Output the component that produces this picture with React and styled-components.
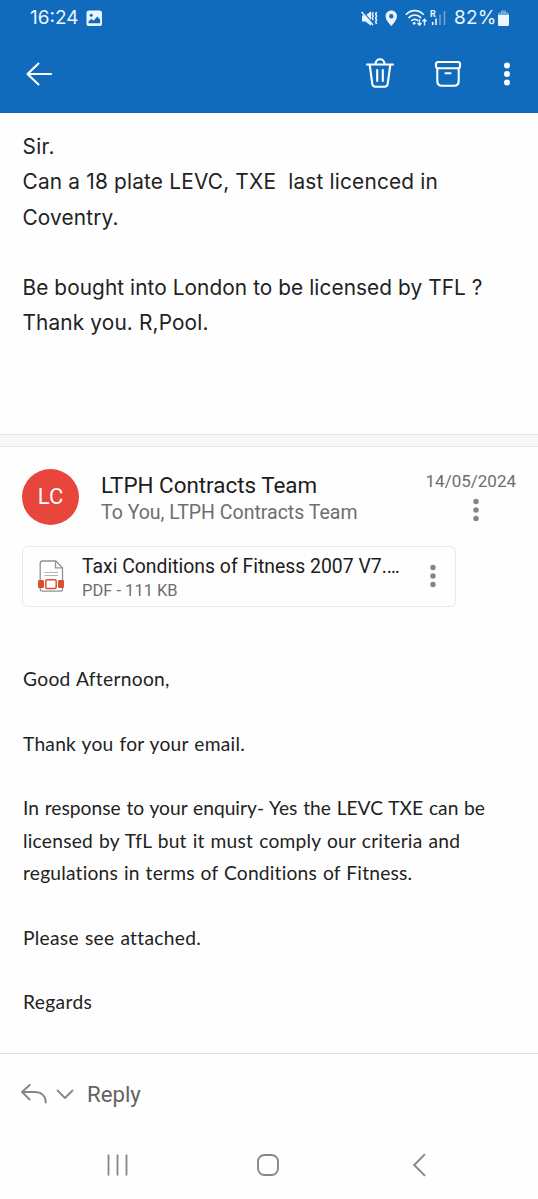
import React from "react";
import styled, { createGlobalStyle } from "styled-components";

const GlobalStyle = createGlobalStyle`
    * {
        box-sizing: border-box;
    }
    body {
        margin: 0;
        background: #fff;
    }
    svg {
        display: block;
        flex: none;
    }
`;

const Screen = styled.div`
    display: flex;
    flex-direction: column;
    width: 538px;
    height: 1199px;
    overflow: hidden;
    background: #fefefe;
    font-family: Roboto, sans-serif;
`;

const Header = styled.header`
    height: 113px;
    background: #106bbc;
    color: #fff;
`;

const StatusBar = styled.div`
    display: flex;
    align-items: center;
    justify-content: space-between;
    height: 36px;
    padding: 0 29px 0 30px;
    font: 400 19px/36px Inter, sans-serif;
    color: #eaf5ff;
`;

const StatusGroup = styled.div`
    display: flex;
    align-items: center;
    gap: ${(p) => p.$gap || 0}px;
`;

const Clock = styled.span`
    width: 56px;
`;

const Battery = styled.span`
    width: 44px;
    margin-left: 7px;
    letter-spacing: 0.2px;
`;

const Toolbar = styled.div`
    display: flex;
    align-items: center;
    height: 77px;
    padding: 0 27px 1px 25px;
`;

const Actions = styled.div`
    display: flex;
    align-items: center;
    margin-left: auto;
`;

const IconButton = styled.button`
    display: flex;
    padding: 0;
    border: 0;
    background: none;
    color: inherit;
    margin-left: ${(p) => p.$gap || 0}px;
`;

const SentMessage = styled.section`
    height: 321px;
    padding: 16px 23px 0 22.5px;
    font: 400 20.8px/35.25px Inter, sans-serif;
    color: #222;
`;

const ReceivedMessage = styled.section`
    height: 606px;
    padding: 22px 22px 0;
`;

const Line = styled.p`
    margin: 0;
    min-height: 1lh;
    white-space: pre;
    letter-spacing: ${(p) => p.$track || 0}px;
`;

const Divider = styled.div`
    height: 13px;
    background: #f7f7f7;
    border: solid #e6e6e6;
    border-width: 1px 0;
`;

const Sender = styled.div`
    display: flex;
    height: 57px;
`;

const Avatar = styled.div`
    width: 57px;
    height: 56px;
    border-radius: 50%;
    background: #e8453c;
    color: #fff;
    font-size: 22px;
    line-height: 56px;
    text-align: center;
`;

const Names = styled.div`
    flex: 1;
    padding: 2.5px 0 0 22px;
    line-height: 27px;
    white-space: nowrap;
`;

const Name = styled.div`
    font-size: 22.4px;
    color: #1c1c1c;
`;

const Recipients = styled.div`
    font-size: 19.5px;
    color: #6e6e6e;
`;

const Meta = styled.div`
    display: flex;
    flex-direction: column;
    align-items: flex-end;
    font-size: 17px;
    line-height: 24px;
    color: #6e6e6e;
    svg {
        margin: 5px 36px 0 0;
        color: #858585;
    }
`;

const Attachment = styled.div`
    display: flex;
    width: 434px;
    height: 61px;
    margin-top: 20px;
    padding: 8px 18px 0 15px;
    border: 1px solid #e8e8e8;
    border-radius: 6px;
`;

const FileInfo = styled.div`
    flex: 1;
    padding-left: 17px;
    line-height: 24px;
    white-space: nowrap;
`;

const FileName = styled.div`
    font-size: 19.4px;
    color: #1c1c1c;
`;

const FileMeta = styled.div`
    font-size: 16.5px;
    color: #6e6e6e;
`;

const FileIcon = styled.div`
    padding-top: 5px;
`;

const FileMenu = styled.div`
    padding-top: 9px;
    color: #858585;
`;

const Body = styled.div`
    margin: 56px 0 0 1px;
    font: 400 19.2px/32.35px Lato, sans-serif;
    word-spacing: 0.8px;
    color: #222;
`;

const ReplyBar = styled.footer`
    display: flex;
    align-items: center;
    height: 78px;
    padding: 2px 20px 0;
    border-top: 1px solid #e0e0e0;
    font-size: 22.2px;
    color: #636363;
`;

const ReplyLabel = styled.span`
    margin-left: 13px;
`;

const NavBar = styled.nav`
    display: flex;
    align-items: center;
    height: 67px;
    padding-left: 106px;
`;

const NavItem = styled.div`
    width: ${(p) => p.$width}px;
`;

const sentLines = [
    { text: "Sir.", track: 0.35 },
    { text: "Can a 18 plate LEVC, TXE  last licenced in", track: 0.2 },
    { text: "Coventry.", track: 0.15 },
    { text: "" },
    { text: "Be bought into London to be licensed by TFL ?", track: 0.08 },
    { text: "Thank you. R,Pool.", track: 0.15 },
];

const receivedLines = [
    { text: "Good Afternoon,", track: 0.3 },
    { text: "" },
    { text: "Thank you for your email.", track: 0.25 },
    { text: "" },
    { text: "In response to your enquiry- Yes the LEVC TXE can be", track: 0.02 },
    { text: "licensed by TfL but it must comply our criteria and", track: 0.24 },
    { text: "regulations in terms of Conditions of Fitness.", track: 0.21 },
    { text: "" },
    { text: "Please see attached.", track: 0.3 },
    { text: "" },
    { text: "Regards", track: 0.35 },
];

const Dots = ({ r = 2.7 }) => (
    <svg width="8" height="24" viewBox="0 0 8 24" fill="currentColor">
        <circle cx="4" cy="3.5" r={r} />
        <circle cx="4" cy="12" r={r} />
        <circle cx="4" cy="20.5" r={r} />
    </svg>
);

const PictureIcon = () => (
    <svg width="17" height="17" viewBox="0 0 17 17">
        <rect x="0.5" y="0.5" width="15.5" height="15.5" rx="2.6" fill="#eaf5ff" />
        <circle cx="5.2" cy="5.2" r="1.5" fill="#106bbc" />
        <path d="M2.5 13.2v-1.6l2.8-2.8 2.2 2 3.8-4.3 2.8 3v3.7z" fill="#106bbc" />
    </svg>
);

const MuteIcon = () => (
    <svg width="17" height="17" viewBox="0 0 17 17" fill="none">
        <path d="M1 5.5h3.4L10 1.2v14.6L4.4 11.5H1z" fill="#eaf5ff" />
        <path d="M1.5 1.2 11.5 12.6" stroke="#106bbc" strokeWidth="1.4" />
        <path d="M0.6 2 12 15" stroke="#eaf5ff" strokeWidth="1.5" />
        <path
            d="M12.2 2.2l-1 1.9 1 2-1 2 1 2M15.6 2.2l-1 1.9 1 2-1 2 1 2-1 2 1 1.9"
            stroke="#eaf5ff"
            strokeWidth="1.5"
        />
    </svg>
);

const PinIcon = () => (
    <svg width="13" height="17" viewBox="0 0 13 17">
        <path
            d="M6.3.5C3 .5.6 3 .6 6.2c0 3.4 3 6.6 5.7 9.8C9 12.8 12 9.6 12 6.2 12 3 9.6.5 6.3.5zm0 3.5a2.200 2.200 0 1 1 0 4.400 2.200 2.200 0 0 1 0-4.400z"
            fill="#eaf5ff"
        />
    </svg>
);

const WifiIcon = () => (
    <svg width="23" height="18" viewBox="0 0 23 18" fill="none" stroke="#eaf5ff" strokeWidth="1.6">
        <path d="M0.8 5.8C6 .2 13.5.2 18.8 5.8M3.500 9c3.600-4 9-4 12.600 0M6.300 12c2-2.200 5-2.200 7 0" />
        <circle cx="9.2" cy="14.3" r="1.4" fill="#eaf5ff" stroke="none" />
        <path d="M14.5 10v6M12.5 14l2 2.300 2-2.300M19.5 16.5v-6M17.5 12.500l2-2.300 2 2.300" strokeWidth="1.3" />
    </svg>
);

const SignalLabel = styled.text`
    font: 700 9px Roboto, sans-serif;
    fill: #eaf5ff;
`;

const SignalIcon = () => (
    <svg width="17" height="18" viewBox="0 0 17 18">
        <SignalLabel x="0" y="7.6">R</SignalLabel>
        <path d="M2.7 13v3M6 9.5V16" stroke="#eaf5ff" strokeWidth="1.6" />
        <path d="M10 5.5V16M14.5 2v14" stroke="#6fa9dc" strokeWidth="1.5" />
    </svg>
);

const BatteryIcon = () => (
    <svg width="11" height="17" viewBox="0 0 11 17">
        <path d="M3 .5h5v2h1.5Q11 2.5 11 4v2H0V4q0-1.500 1.500-1.500H3z" fill="#6fa9dc" />
        <path d="M0 5h11v9.5q0 1.500-1.500 1.500h-8Q0 16 0 14.500z" fill="#eaf5ff" />
    </svg>
);

const BackIcon = () => (
    <svg width="28" height="26" viewBox="0 0 28 26" fill="none" stroke="currentColor" strokeWidth="2.1" strokeLinecap="round" strokeLinejoin="round">
        <path d="M13.5 2.600 2.500 13l11 10.400M2.500 13h23.500" />
    </svg>
);

const TrashIcon = () => (
    <svg width="30" height="32" viewBox="0 0 30 32" fill="none" stroke="currentColor" strokeWidth="2.1" strokeLinecap="round">
        <path d="M2 6.500h26M10.500 6C10.500-.3 19.500-.3 19.500 6M4.700 7l2.600 18.800q.4 2.900 3.200 2.900h9q2.800 0 3.200-2.900L25.300 7M12.200 12v11M17.800 12v11" />
    </svg>
);

const ArchiveIcon = () => (
    <svg width="28" height="28" viewBox="0 0 28 28" fill="none" stroke="currentColor" strokeWidth="2.1" strokeLinecap="round">
        <rect x="2" y="2" width="24" height="6.300" rx="2" />
        <path d="M3.300 8.500v12.500q0 4.700 4.700 4.700h12q4.700 0 4.700-4.700V8.500M11.500 13.300h5" />
    </svg>
);

const PdfIcon = () => (
    <svg width="27" height="33" viewBox="0 0 27 33" fill="none">
        <path
            d="M4.5 1h13.3L24.5 7.700V29q0 2.200-2.200 2.200H4.200Q2.200 31.200 2.200 29V3.200Q2.200 1 4.500 1z"
            fill="#fff"
            stroke="#929292"
            strokeWidth="1.3"
        />
        <path d="M17.500 1.200v6.600h6.800" stroke="#929292" strokeWidth="1.3" />
        <path d="M6.500 12.500h13.500M6.500 15.500h13.500" stroke="#b4b4b4" strokeWidth="1.1" />
        <rect x="0" y="20" width="6" height="8" rx="1.2" fill="#d8502f" />
        <rect x="20" y="20" width="6" height="8" rx="1.2" fill="#d8502f" />
        <rect x="7.8" y="19.800" width="10.400" height="8.700" rx="1.5" fill="#fff" stroke="#d8502f" strokeWidth="1.5" />
    </svg>
);

const ReplyIcon = () => (
    <svg width="28" height="22" viewBox="0 0 28 22" fill="none" stroke="#868686" strokeWidth="1.9" strokeLinecap="round" strokeLinejoin="round">
        <path d="M9.700 2 2 9l7.700 7.500M2 9h12.500C21 9 25.800 12.500 25.800 19.500" />
    </svg>
);

const ChevronIcon = () => (
    <svg width="18" height="12" viewBox="0 0 18 12" fill="none" stroke="#868686" strokeWidth="1.8" strokeLinecap="round" strokeLinejoin="round">
        <path d="M1.500 2.500 9 10l7.500-7.500" />
    </svg>
);

const RecentsIcon = () => (
    <svg width="24" height="24" viewBox="0 0 24 24" stroke="#868686" strokeWidth="1.8">
        <path d="M2.500 1.500v21M11.500 1.500v21M20.500 1.500v21" />
    </svg>
);

const HomeIcon = () => (
    <svg width="24" height="24" viewBox="0 0 24 24" fill="none" stroke="#868686" strokeWidth="1.9">
        <rect x="2" y="2" width="20" height="20" rx="6.5" />
    </svg>
);

const NavBackIcon = () => (
    <svg width="14" height="24" viewBox="0 0 14 24" fill="none" stroke="#868686" strokeWidth="1.9">
        <path d="M13 1.200 2.200 12 13 22.800" />
    </svg>
);

export default function App() {
    return (
        <>
            <GlobalStyle />
            <Screen>
                <Header>
                    <StatusBar>
                        <StatusGroup>
                            <Clock>16:24</Clock>
                            <PictureIcon />
                        </StatusGroup>
                        <StatusGroup>
                            <StatusGroup $gap={7}>
                                <MuteIcon />
                                <PinIcon />
                                <WifiIcon />
                            </StatusGroup>
                            <StatusGroup $gap={2}>
                                <span />
                                <SignalIcon />
                            </StatusGroup>
                            <Battery>82%</Battery>
                            <BatteryIcon />
                        </StatusGroup>
                    </StatusBar>
                    <Toolbar>
                        <IconButton>
                            <BackIcon />
                        </IconButton>
                        <Actions>
                            <IconButton>
                                <TrashIcon />
                            </IconButton>
                            <IconButton $gap={39}>
                                <ArchiveIcon />
                            </IconButton>
                            <IconButton $gap={41}>
                                <Dots r={3} />
                            </IconButton>
                        </Actions>
                    </Toolbar>
                </Header>

                <SentMessage>
                    {sentLines.map((line, i) => (
                        <Line key={i} $track={line.track}>
                            {line.text}
                        </Line>
                    ))}
                </SentMessage>

                <Divider />

                <ReceivedMessage>
                    <Sender>
                        <Avatar>LC</Avatar>
                        <Names>
                            <Name>LTPH Contracts Team</Name>
                            <Recipients>To You, LTPH Contracts Team</Recipients>
                        </Names>
                        <Meta>
                            14/05/2024
                            <Dots />
                        </Meta>
                    </Sender>
                    <Attachment>
                        <FileIcon>
                            <PdfIcon />
                        </FileIcon>
                        <FileInfo>
                            <FileName>Taxi Conditions of Fitness 2007 V7.…</FileName>
                            <FileMeta>PDF - 111 KB</FileMeta>
                        </FileInfo>
                        <FileMenu>
                            <Dots />
                        </FileMenu>
                    </Attachment>
                    <Body>
                        {receivedLines.map((line, i) => (
                            <Line key={i} $track={line.track}>
                                {line.text}
                            </Line>
                        ))}
                    </Body>
                </ReceivedMessage>

                <ReplyBar>
                    <ReplyIcon />
                    <IconButton $gap={8}>
                        <ChevronIcon />
                    </IconButton>
                    <ReplyLabel>Reply</ReplyLabel>
                </ReplyBar>

                <NavBar>
                    <NavItem $width={150}>
                        <RecentsIcon />
                    </NavItem>
                    <NavItem $width={156}>
                        <HomeIcon />
                    </NavItem>
                    <NavBackIcon />
                </NavBar>
            </Screen>
        </>
    );
}
